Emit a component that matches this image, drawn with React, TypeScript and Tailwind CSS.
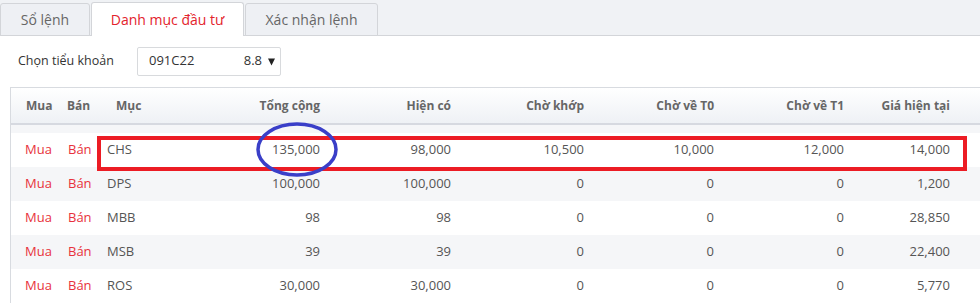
import React from "react";

const rows = [
  ["CHS", "135,000", "98,000", "10,500", "10,000", "12,000", "14,000"],
  ["DPS", "100,000", "100,000", "0", "0", "0", "1,200"],
  ["MBB", "98", "98", "0", "0", "0", "28,850"],
  ["MSB", "39", "39", "0", "0", "0", "22,400"],
  ["ROS", "30,000", "30,000", "0", "0", "0", "5,770"],
];

const grid =
  "grid grid-cols-[48px_39px_100px_130px_131px_133px_130px_130px_106px_1fr]";

export default function App() {
  return (
    <div
      className="relative w-[980px] h-[304px] overflow-hidden bg-white"
      style={{ fontFamily: '"Open Sans", "Noto Sans", sans-serif' }}
    >
      {/* Tabs */}
      <div className="flex items-end h-[36px] bg-[#f0f2f5] border-b border-[#d3d5d9]">
        <div className="h-[33px] w-[90px] mb-[-1px] flex items-center justify-center bg-[#eef0f4] border border-[#d3d5d9] rounded-t-[3px] text-[14px] text-[#666]">
          Sổ lệnh
        </div>
        <div className="h-[34px] w-[153px] ml-[1px] mb-[-1px] flex items-center justify-center bg-white border border-b-0 border-[#d3d5d9] rounded-t-[3px] text-[14px] text-[#e3232c]">
          Danh mục đầu tư
        </div>
        <div className="h-[33px] w-[133px] ml-[1px] mb-[-1px] flex items-center justify-center bg-[#eef0f4] border border-[#d3d5d9] rounded-t-[3px] text-[14px] text-[#666]">
          Xác nhận lệnh
        </div>
      </div>

      {/* Account selector */}
      <div className="flex items-center h-[51px] pl-[18px]">
        <span className="text-[12.5px] text-[#333] w-[119px]">Chọn tiểu khoản</span>
        <div className="h-[29px] w-[144px] mt-[-1px] border border-[#d8dadd] rounded-[2px] flex items-center pl-[11px] pr-[5px] text-[13px] text-[#333]">
          <span>091C22</span>
          <span className="ml-auto mr-[6px]">8.8</span>
          <svg width="7" height="9" viewBox="0 0 7 9">
            <path d="M0 1.5 H7 L3.5 8.5 Z" fill="#222" />
          </svg>
        </div>
      </div>

      {/* Table */}
      <div className="ml-[10px] border-l border-t border-[#d8dbe0]">
        <div
          className={`${grid} h-[37px] items-center bg-gradient-to-b from-white to-[#eef1f5] border-b-2 border-[#d6d9e0] text-[12px] font-bold text-[#666]`}
        >
          <div className="pl-[15px]">Mua</div>
          <div className="pl-[8px]">Bán</div>
          <div className="pl-[18px]">Mục</div>
          <div className="text-right pr-[8px]">Tổng cộng</div>
          <div className="text-right pr-[8px]">Hiện có</div>
          <div className="text-right pr-[8px]">Chờ khớp</div>
          <div className="text-right pr-[8px]">Chờ về T0</div>
          <div className="text-right pr-[8px]">Chờ về T1</div>
          <div className="text-right pr-[8px]">Giá hiện tại</div>
          <div />
        </div>
        <div className="h-[8px] bg-[#f5f6f8]" />
        {rows.map((r, i) => (
          <div
            key={r[0]}
            className={`${grid} h-[34px] items-center text-[13px] text-[#555] ${
              i % 2 === 1 ? "bg-[#f5f6f8]" : "bg-white"
            }`}
          >
            <div className="pl-[14px] text-[#e8323c]">Mua</div>
            <div className="pl-[9px] text-[#e8323c]">Bán</div>
            <div className="pl-[9px]">{r[0]}</div>
            {r.slice(1).map((v, j) => (
              <div key={j} className="text-right pr-[8px]">
                {v}
              </div>
            ))}
            <div />
          </div>
        ))}
      </div>

      {/* Annotations */}
      <div className="absolute left-[97px] top-[136px] w-[870px] h-[35px] border-[4px] border-[#ec1c24] pointer-events-none" />
      <svg
        className="absolute left-0 top-0 pointer-events-none"
        width="980"
        height="304"
      >
        <ellipse
          cx="297"
          cy="149.5"
          rx="39"
          ry="25.5"
          fill="none"
          stroke="#3a3fc8"
          strokeWidth="3.5"
        />
      </svg>
    </div>
  );
}
